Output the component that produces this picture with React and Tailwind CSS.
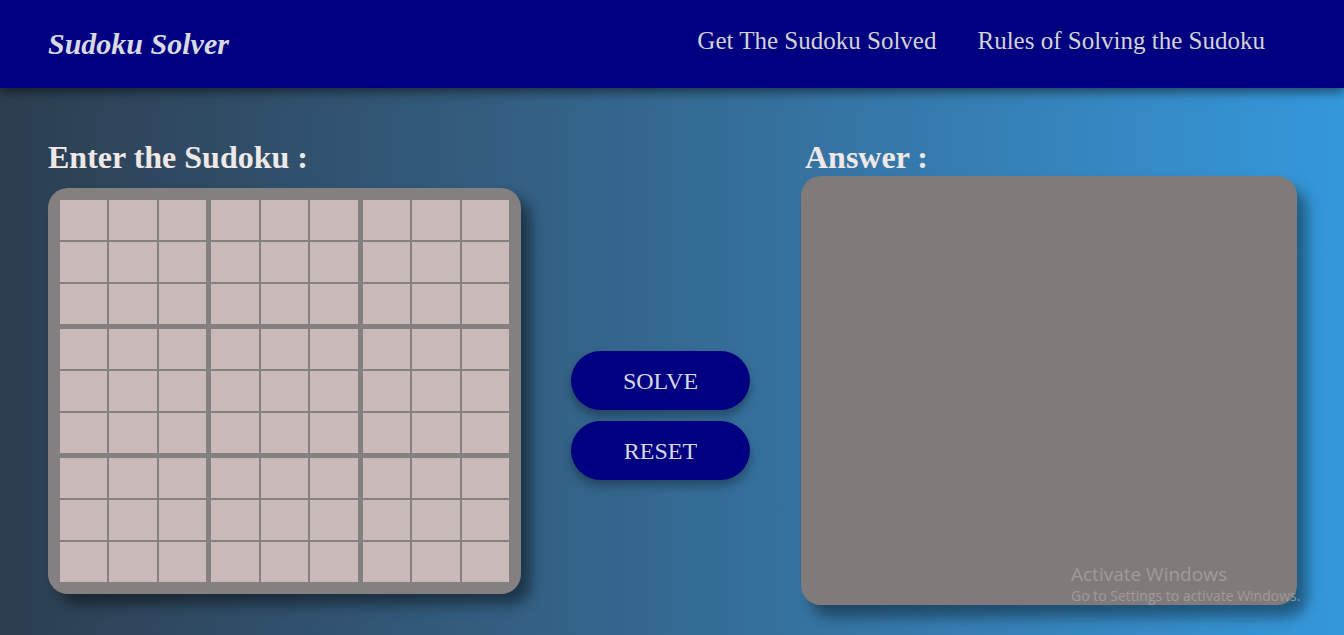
import { useState } from 'react'

const serif = "font-['Liberation_Serif','Times_New_Roman',serif]"

const emptyBoard = () => Array.from({ length: 9 }, () => Array(9).fill(''))

function Board({ values, onChange }) {
  return (
    <div className="rounded-[20px] bg-[#858080] p-3 shadow-[10px_10px_14px_rgba(0,0,0,0.45)]">
      <div className="grid w-[449px] grid-cols-3 gap-[5px]">
        {Array.from({ length: 9 }, (_, box) => (
          <div key={box} className="grid grid-cols-3 gap-[2px]">
            {Array.from({ length: 9 }, (_, i) => {
              const r = Math.floor(box / 3) * 3 + Math.floor(i / 3)
              const c = (box % 3) * 3 + (i % 3)
              return (
                <input
                  key={i}
                  value={values[r][c]}
                  maxLength={1}
                  onChange={(e) => onChange(r, c, e.target.value)}
                  className={`h-10 w-full min-w-0 bg-[#c9b9b8] text-center text-2xl text-[#000080] outline-none ${serif}`}
                />
              )
            })}
          </div>
        ))}
      </div>
    </div>
  )
}

export default function App() {
  const [values, setValues] = useState(emptyBoard)

  const setCell = (r, c, v) => {
    const next = values.map((row) => row.slice())
    next[r][c] = v.replace(/[^1-9]/g, '')
    setValues(next)
  }

  return (
    <div className={`relative min-h-screen overflow-hidden bg-gradient-to-r from-[#2c3e50] to-[#3498db] ${serif}`}>
      <header className="relative z-10 flex h-[88px] items-center justify-between bg-[#000080] pl-12 pr-[79px] shadow-[0_4px_10px_rgba(0,0,0,0.5)]">
        <h1 className="pb-[2px] text-[30px] font-bold italic text-[#d9d9e3]">Sudoku Solver</h1>
        <nav className="flex gap-[41px] pb-[6px] text-[25px] text-[#d3d3d3]">
          <a href="#solve">Get The Sudoku Solved</a>
          <a href="#rules">Rules of Solving the Sudoku</a>
        </nav>
      </header>

      <main className="flex pl-12 pt-[51px]">
        <section className="w-[473px]">
          <h2 className="mb-3 text-[32px] font-bold leading-[37px] text-[#efe8e8]">Enter the Sudoku :</h2>
          <Board values={values} onChange={setCell} />
        </section>

        <div className="ml-[50px] mt-[212px] flex w-[179px] flex-col gap-[11px]">
          <button className="h-[59px] rounded-full bg-[#000080] text-[24px] text-[#d8d8e4] shadow-[0_6px_10px_rgba(0,0,0,0.3)]">
            SOLVE
          </button>
          <button
            onClick={() => setValues(emptyBoard())}
            className="h-[59px] rounded-full bg-[#000080] text-[24px] text-[#d8d8e4] shadow-[0_6px_10px_rgba(0,0,0,0.3)]"
          >
            RESET
          </button>
        </div>

        <section className="ml-[51px] w-[496px]">
          <h2 className="pl-1 text-[32px] font-bold leading-[37px] text-[#efe8e8]">Answer :</h2>
          <div className="h-[429px] rounded-[20px] bg-[#807b7a] shadow-[10px_12px_14px_rgba(0,0,0,0.4)]" />
        </section>
      </main>

      <div className="pointer-events-none absolute left-[1071px] top-[562px] font-['Open_Sans',sans-serif] text-[#a7a4a4]/80">
        <p className="text-[19px] leading-6">Activate Windows</p>
        <p className="text-[14px] leading-5">Go to Settings to activate Windows.</p>
      </div>
    </div>
  )
}
